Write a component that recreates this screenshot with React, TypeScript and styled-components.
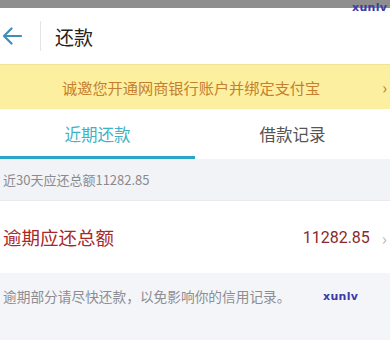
import React from "react";
import styled, { createGlobalStyle } from "styled-components";

const GlobalStyle = createGlobalStyle`
  html, body {
    margin: 0;
    padding: 0;
    background: #f4f5f9;
  }
  body {
    font-family: "Noto Sans CJK SC", "Noto Sans", sans-serif;
  }
`;

const Page = styled.div`
  position: relative;
  width: 390px;
  height: 340px;
  overflow: hidden;
  background: #f4f5f9;
`;

const StatusBar = styled.div`
  height: 8px;
  background: #8e8e8e;
`;

const Header = styled.div`
  height: 56px;
  background: #fff;
  display: flex;
  align-items: center;
`;

const Back = styled.div`
  width: 40px;
  display: flex;
  align-items: center;
  padding-left: 2px;
  box-sizing: border-box;
  color: #3d8fb7;
`;

const Divider = styled.div`
  width: 1px;
  height: 30px;
  background: #e4e4e4;
  margin-right: 14px;
`;

const Title = styled.h1`
  margin: 0;
  font-size: 19px;
  font-weight: 400;
  color: #222;
`;

const Banner = styled.div`
  height: 44px;
  border-top: 1px solid #efe39a;
  background: #fcef9f;
  display: flex;
  align-items: center;
  justify-content: space-between;
  padding: 0 3px 0 62px;
`;

const BannerText = styled.span`
  font-size: 15.2px;
  color: #c67f2e;
`;

const BannerArrow = styled.span`
  color: #b9802f;
  font-size: 16px;
`;

const Tabs = styled.div`
  display: flex;
  background: #fff;
  height: 50px;
`;

const Tab = styled.div<{ $active?: boolean }>`
  flex: 1;
  display: flex;
  align-items: center;
  justify-content: center;
  font-size: 16.5px;
  color: ${(p) => (p.$active ? "#3fb2c6" : "#555")};
  border-bottom: 3px solid ${(p) => (p.$active ? "#2ba6c6" : "transparent")};
  padding-top: 2px;
  box-sizing: border-box;
`;

const InfoBar = styled.div`
  height: 41px;
  display: flex;
  align-items: center;
  padding-left: 3px;
  font-size: 13px;
  color: #8a8a8f;
  background: #f2f3f7;
  border-bottom: 1px solid #e9e9ee;
`;

const Row = styled.div`
  height: 72px;
  background: #fff;
  display: flex;
  align-items: center;
  padding: 0 3px;
`;

const RowLabel = styled.span`
  flex: 1;
  font-size: 18.5px;
  color: #a8282a;
`;

const RowValue = styled.span`
  font-family: "Roboto", "Noto Sans", sans-serif;
  font-size: 16px;
  color: #8a2a2e;
  margin-right: 12px;
`;

const Chevron = styled.span`
  color: #b8b8bc;
  font-size: 17px;
`;

const Note = styled.div`
  padding: 13px 0 0 3px;
  font-size: 13.7px;
  color: #8d8d92;
`;

const Watermark = styled.span<{ $top: number; $left: number }>`
  position: absolute;
  top: ${(p) => p.$top}px;
  left: ${(p) => p.$left}px;
  font-family: "DejaVu Sans", sans-serif;
  font-weight: 700;
  font-size: 11px;
  color: #3a3aa8;
  letter-spacing: 0.3px;
`;

export default function App() {
  return (
    <Page>
      <GlobalStyle />
      <StatusBar />
      <Header>
        <Back>
          <svg width="20" height="18" viewBox="0 0 20 18" fill="none">
            <path d="M19 9H2M9.5 1.5L2 9l7.5 7.5" stroke="currentColor" strokeWidth="2.2" strokeLinecap="round" strokeLinejoin="round" />
          </svg>
        </Back>
        <Divider />
        <Title>还款</Title>
      </Header>
      <Banner>
        <BannerText>诚邀您开通网商银行账户并绑定支付宝</BannerText>
        <BannerArrow>›</BannerArrow>
      </Banner>
      <Tabs>
        <Tab $active>近期还款</Tab>
        <Tab>借款记录</Tab>
      </Tabs>
      <InfoBar>近30天应还总额11282.85</InfoBar>
      <Row>
        <RowLabel>逾期应还总额</RowLabel>
        <RowValue>11282.85</RowValue>
        <Chevron>›</Chevron>
      </Row>
      <Note>逾期部分请尽快还款，以免影响你的信用记录。</Note>
      <Watermark $top={1} $left={352}>xunlv</Watermark>
      <Watermark $top={290} $left={323}>xunlv</Watermark>
    </Page>
  );
}
